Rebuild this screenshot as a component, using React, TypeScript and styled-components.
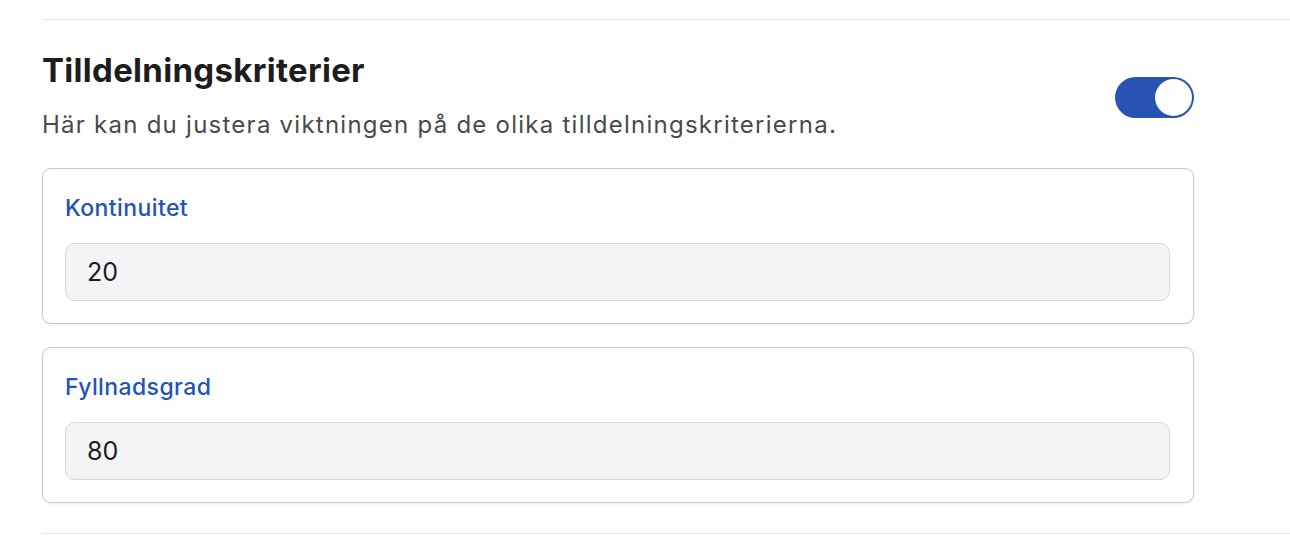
import React, { useState } from "react";
import styled, { createGlobalStyle } from "styled-components";

const Global = createGlobalStyle`
  html, body { margin: 0; padding: 0; background: #ffffff; }
  body { font-family: "Inter", "Liberation Sans", sans-serif; -webkit-font-smoothing: antialiased; }
  * { box-sizing: border-box; }
`;

const Page = styled.div`
  padding: 19px 0 0 42px;
  width: 1290px;
  height: 556px;
`;

const Divider = styled.hr`
  margin: 0;
  border: 0;
  border-top: 1px solid #e6e6e6;
`;

const Section = styled.section`
  width: 1152px;
  padding: 30px 0 30px;
  display: flex;
  flex-direction: column;
  gap: 23px;
`;

const Header = styled.div`
  display: flex;
  align-items: flex-start;
  justify-content: space-between;
  margin-bottom: 5px;
`;

const HeaderText = styled.div`
  display: flex;
  flex-direction: column;
  gap: 20px;
`;

const Title = styled.h2`
  margin: 0;
  font-size: 33px;
  line-height: 40px;
  font-weight: 700;
  color: #1d1d1d;
  letter-spacing: 0.3px;
`;

const Subtitle = styled.p`
  margin: 0;
  font-size: 24px;
  line-height: 30px;
  color: #4a4a4a;
  letter-spacing: 1.25px;
`;

const Switch = styled.button<{ $on: boolean }>`
  margin-top: 27px;
  width: 79px;
  height: 41px;
  border-radius: 21px;
  border: 0;
  padding: 2px;
  background: ${(p) => (p.$on ? "#2753b3" : "#c9c9c9")};
  display: flex;
  justify-content: ${(p) => (p.$on ? "flex-end" : "flex-start")};
  align-items: center;
  cursor: pointer;
`;

const Knob = styled.span`
  width: 37px;
  height: 37px;
  border-radius: 50%;
  background: #ffffff;
`;

const Card = styled.div`
  border: 1px solid #c9c9c9;
  border-radius: 9px;
  box-shadow: 0 1px 3px rgba(0, 0, 0, 0.08);
  padding: 24px 23px 22px 22px;
  display: flex;
  flex-direction: column;
  gap: 20px;
  background: #fff;
`;

const Label = styled.label`
  font-size: 23px;
  line-height: 30px;
  font-weight: 500;
  color: #2452b8;
  letter-spacing: 0.4px;
`;

const Input = styled.input`
  height: 58px;
  width: 100%;
  border: 1px solid #d6d6da;
  border-radius: 10px;
  background: #f4f4f6;
  padding: 0 21px;
  font-family: inherit;
  font-size: 25px;
  color: #1c1c1c;
  outline: none;
`;

const criteria = [
  { id: "kontinuitet", label: "Kontinuitet", value: "20" },
  { id: "fyllnadsgrad", label: "Fyllnadsgrad", value: "80" },
];

export default function App() {
  const [on, setOn] = useState(true);
  return (
    <>
      <Global />
      <Page>
        <Divider />
        <Section>
          <Header>
            <HeaderText>
              <Title>Tilldelningskriterier</Title>
              <Subtitle>Här kan du justera viktningen på de olika tilldelningskriterierna.</Subtitle>
            </HeaderText>
            <Switch role="switch" aria-checked={on} $on={on} onClick={() => setOn(!on)}>
              <Knob />
            </Switch>
          </Header>
          {criteria.map((c) => (
            <Card key={c.id}>
              <Label htmlFor={c.id}>{c.label}</Label>
              <Input id={c.id} defaultValue={c.value} />
            </Card>
          ))}
        </Section>
        <Divider />
      </Page>
    </>
  );
}
